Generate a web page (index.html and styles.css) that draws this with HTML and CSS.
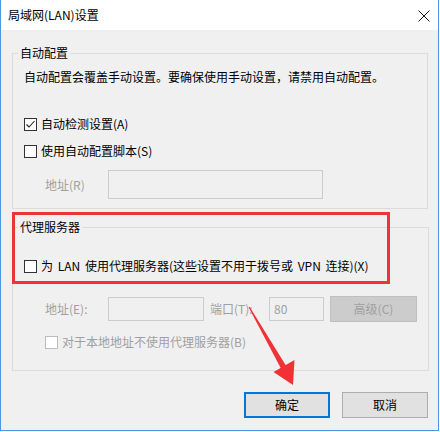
FILE: index.html
```html
<!DOCTYPE html>
<html lang="zh-CN">
<head>
    <meta charset="UTF-8">
    <link rel="stylesheet" href="styles.css">
    <title>局域网(LAN)设置</title>
</head>
<body>
    <div class="window">
        <div class="titlebar">
            <span class="title">局域网(LAN)设置</span>
            <svg class="close" width="12" height="12" viewBox="0 0 12 12">
                <path d="M0.5 0.5 L11.5 11.5 M11.5 0.5 L0.5 11.5" stroke="#111" stroke-width="1" fill="none"/>
            </svg>
        </div>

        <div class="content">
            <fieldset class="group auto">
                <legend>自动配置</legend>
                <div class="desc">自动配置会覆盖手动设置。要确保使用手动设置，请禁用自动配置。</div>

                <div class="check row1">
                    <span class="box">
                        <svg width="11" height="11" viewBox="0 0 11 11">
                            <path d="M1.5 5.5 L4 8 L9.5 2" stroke="#222" stroke-width="1.1" fill="none"/>
                        </svg>
                    </span>
                    <span>自动检测设置(A)</span>
                </div>
                <div class="check row2">
                    <span class="box"></span>
                    <span>使用自动配置脚本(S)</span>
                </div>
                <div class="field script">
                    <span class="label">地址(R)</span>
                    <span class="input wide"></span>
                </div>
            </fieldset>

            <fieldset class="group proxy">
                <legend>代理服务器</legend>
                <div class="check row3">
                    <span class="box"></span>
                    <span class="spaced">为 LAN 使用代理服务器(这些设置不用于拨号或 VPN 连接)(X)</span>
                </div>
                <div class="field proxyrow">
                    <span class="label">地址(E):</span>
                    <span class="input addr"></span>
                    <span class="label port">端口(T):</span>
                    <span class="input portbox">80</span>
                    <span class="btn disabled">高级(C)</span>
                </div>
                <div class="check row4 off">
                    <span class="box"></span>
                    <span>对于本地地址不使用代理服务器(B)</span>
                </div>
            </fieldset>

            <div class="actions">
                <span class="btn ok">确定</span>
                <span class="btn">取消</span>
            </div>
        </div>
    </div>

    <div class="mark"></div>
    <svg class="arrow" width="440" height="432" viewBox="0 0 440 432">
        <polygon points="248.6,307.3 249.6,306.7 286.5,366.5 281.5,369.5" fill="#f03237"/>
        <polygon points="293,385 273.5,372 294.5,360" fill="#f03237"/>
    </svg>
</body>
</html>
```

FILE: styles.css
```css
* {
    margin: 0;
    padding: 0;
    box-sizing: border-box;
}

body {
    background: #fff;
    font-family: "Noto Sans CJK SC", "Noto Sans", sans-serif;
    font-size: 12px;
    line-height: 16px;
    color: #000;
}

.window {
    width: 439px;
    height: 431px;
    background: #f0f0f0;
    border: 1px solid #4d96e6;
    border-top: none;
}

.titlebar {
    height: 30px;
    background: #fff;
    display: flex;
    align-items: center;
    justify-content: space-between;
    padding: 0 8px 0 7px;
}

.close {
    margin-top: 1px;
}

.content {
    padding: 15px 10px 0 11px;
}

.group {
    border: 1px solid #dcdcdc;
    padding: 0 11px 9px 11px;
}

.group legend {
    margin-left: -6px;
    padding: 0 2px;
    line-height: 16px;
}

.desc {
    margin-top: 8px;
}

.check {
    display: flex;
    align-items: center;
    gap: 4px;
    height: 16px;
}

.check .box {
    width: 13px;
    height: 13px;
    border: 1px solid #333;
    background: #fff;
    display: flex;
    align-items: center;
    justify-content: center;
}

.row1 { margin-top: 31px; }
.row2 { margin-top: 11px; }

.field {
    display: flex;
    align-items: center;
    padding-left: 21px;
}

.label {
    color: #a0a0a0;
}

.input {
    border: 1px solid #cccccc;
    background: #f0f0f0;
    color: #a0a0a0;
    height: 24px;
    padding-left: 4px;
    display: flex;
    align-items: center;
}

.script {
    margin-top: 11px;
}

.script .label {
    width: 63px;
}

.input.wide {
    width: 215px;
    height: 29px;
}

.group.proxy {
    margin-top: 10px;
    padding-bottom: 20px;
}

.row3 { margin-top: 23px; }

.spaced {
    word-spacing: 2px;
}

.proxyrow {
    margin-top: 22px;
}

.proxyrow > .label:first-child {
    width: 63px;
}

.input.addr {
    width: 96px;
}

.label.port {
    margin-left: 6px;
    width: 59px;
}

.input.portbox {
    width: 55px;
}

.btn {
    display: flex;
    align-items: center;
    justify-content: center;
    width: 86px;
    height: 26px;
    background: #e1e1e1;
    border: 1px solid #adadad;
}

.btn.disabled {
    margin-left: 6px;
    width: 87px;
    background: #cccccc;
    border-color: #bfbfbf;
    color: #a0a0a0;
}

.row4 {
    margin-top: 12px;
    padding-left: 21px;
}

.row4.off {
    color: #a0a0a0;
}

.row4 .box {
    border-color: #bcbcbc;
}

.actions {
    display: flex;
    justify-content: flex-end;
    gap: 12px;
    margin-top: 21px;
}

.btn.ok {
    border: 2px solid #0078d7;
}

.mark {
    position: absolute;
    left: 12px;
    top: 212px;
    width: 378px;
    height: 72px;
    border: 3px solid #ee3438;
}

.arrow {
    position: absolute;
    left: 0;
    top: 0;
    pointer-events: none;
}
```
